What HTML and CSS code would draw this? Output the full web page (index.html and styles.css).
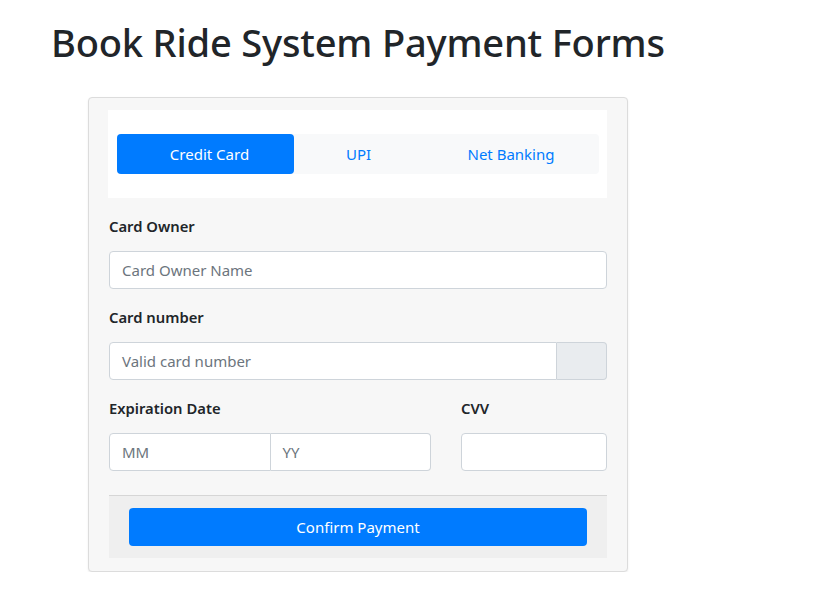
FILE: index.html
```html
<!DOCTYPE html>
<html>
<head>
<meta charset="utf-8">
<link rel="stylesheet" href="styles.css">
</head>
<body>
<div class="page">
  <h1 class="title">Book Ride System Payment Forms</h1>
  <div class="card">
    <div class="tabs-box">
      <div class="pills">
        <div class="pill active">Credit Card</div>
        <div class="pill">UPI</div>
        <div class="pill">Net Banking</div>
      </div>
    </div>
    <div class="field">
      <div class="label">Card Owner</div>
      <div class="input"><span class="ph">Card Owner Name</span></div>
    </div>
    <div class="field">
      <div class="label">Card number</div>
      <div class="input-group">
        <div class="input grow"><span class="ph">Valid card number</span></div>
        <div class="append"></div>
      </div>
    </div>
    <div class="row">
      <div class="field">
        <div class="label">Expiration Date</div>
        <div class="input-group">
          <div class="input half"><span class="ph">MM</span></div>
          <div class="input half second"><span class="ph">YY</span></div>
        </div>
      </div>
      <div class="field">
        <div class="label">CVV</div>
        <div class="input"></div>
      </div>
    </div>
    <div class="footer">
      <div class="btn">Confirm Payment</div>
    </div>
  </div>
</div>
</body>
</html>
```

FILE: styles.css
```css
* { box-sizing: border-box; }
body {
  margin: 0;
  font-family: "Noto Sans", "Open Sans", sans-serif;
  color: #212529;
  background: #fff;
}
.page {
  padding: 18px 0 0 51px;
}
.title {
  margin: 0 0 31px 0;
  font-size: 38.1px;
  line-height: 48px;
  font-weight: 500;
  letter-spacing: -0.2px;
}
.card {
  margin-left: 37px;
  width: 540px;
  border: 1px solid #dcdcdc;
  border-radius: 4px;
  background: #f7f7f7;
  padding: 12px 20px 13px 20px;
  box-shadow: 0 1px 2px rgba(0,0,0,0.08);
}
.tabs-box {
  background: #fff;
  padding: 24px 8px 24px 9px;
  margin-left: -1px;
}
.pills {
  display: grid;
  grid-template-columns: 177px 129px 1fr;
  background: #f8f9fa;
  border-radius: 4px;
  height: 40px;
}
.pill {
  text-align: center;
  line-height: 40px;
  font-size: 15px;
  color: #007bff;
  border-radius: 4px;
}
.pill.active {
  background: #007bff;
  color: #fff;
  padding-left: 8px;
}
.field {
  margin-top: 16px;
}
.label {
  height: 24px;
  line-height: 24px;
  font-size: 14.8px;
  font-weight: 600;
  margin-bottom: 13px;
}
.input {
  height: 38px;
  border: 1px solid #ced4da;
  border-radius: 4px;
  background: #fff;
  padding: 0 12px;
  line-height: 36px;
  font-size: 15px;
}
.ph { color: #6c757d; }
.input-group { display: flex; }
.input.grow { flex: 1; border-radius: 4px 0 0 4px; }
.append {
  width: 50px;
  height: 38px;
  background: #e9ecef;
  border: 1px solid #ced4da;
  border-left: none;
  border-radius: 0 4px 4px 0;
}
.input.half { flex: 1; border-radius: 4px 0 0 4px; }
.input.half.second { border-left: none; border-radius: 0 4px 4px 0; }
.row {
  display: grid;
  grid-template-columns: 322px 1fr;
  column-gap: 30px;
}
.footer {
  margin-top: 24px;
  background: #efefef;
  border-top: 1px solid #d6d6d6;
  padding: 12px 20px;
}
.btn {
  height: 38px;
  background: #007bff;
  color: #fff;
  border-radius: 4px;
  text-align: center;
  line-height: 38px;
  font-size: 15px;
}
```
